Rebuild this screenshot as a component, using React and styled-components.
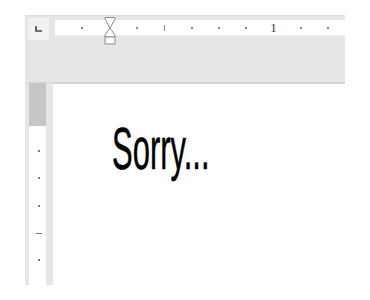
import React from "react";
import styled, { createGlobalStyle } from "styled-components";

const Global = createGlobalStyle`
	body {
		margin: 0;
		background: #ffffff;
		font-family: "Liberation Sans", Arial, sans-serif;
	}
`;

const Frame = styled.div`
	margin: 15px 0 0 25px;
	width: 320px;
	height: 270px;
	background: #e6e6e6;
	border-top: 1px solid #dadada;
	box-sizing: border-box;
	display: flex;
	flex-direction: column;
	overflow: hidden;
`;

const Header = styled.div`
	height: 67px;
	display: flex;
	align-items: flex-start;
	border-bottom: 1px solid #d6d6d6;
	box-sizing: border-box;
`;

const Corner = styled.div`
	width: 21px;
	height: 22px;
	margin: 2px 0 0 3px;
	background: #f2f2f2;
	display: flex;
	align-items: center;
	justify-content: center;
	svg {
		display: block;
	}
`;

const HRuler = styled.div`
	position: relative;
	flex: 1;
	height: 15px;
	margin: 4px 0 0 6px;
	background: #ffffff;
	border-bottom: 1px solid #efefef;
	display: flex;
	align-items: center;
	padding-left: 13.6px;
`;

const HCell = styled.div`
	flex: 0 0 27.33px;
	height: 15px;
	display: flex;
	align-items: center;
	justify-content: center;
	font-family: "Liberation Serif", "Times New Roman", serif;
	font-size: 13px;
	color: #3c3c3c;
`;

const Dot = styled.span`
	width: 2px;
	height: 2px;
	background: #8a8a8a;
`;

const HLine = styled.span`
	width: 1px;
	height: 6px;
	background: #8a8a8a;
`;

const Hourglass = styled.svg`
	position: absolute;
	left: 49px;
	top: -3px;
`;

const Body = styled.div`
	flex: 1;
	display: flex;
`;

const VRuler = styled.div`
	width: 17px;
	margin-left: 4px;
	margin-right: 7px;
	background: #ffffff;
	display: flex;
	flex-direction: column;
	align-items: stretch;
`;

const VThumb = styled.div`
	height: 43px;
	background: #c6c6c6;
	margin-bottom: 11.5px;
`;

const VCell = styled.div`
	flex: 0 0 27.33px;
	display: flex;
	align-items: center;
	justify-content: center;
	padding-left: 3px;
`;

const VDash = styled.span`
	width: ${(p) => (p.$long ? "6px" : "2px")};
	height: ${(p) => (p.$long ? "1px" : "2px")};
	background: #7a7a7a;
`;

const Page = styled.div`
	flex: 1;
	background: #ffffff;
	border-top: 1px solid #d2d2d2;
	padding: 36px 0 0 59px;
`;

const Heading = styled.div`
	display: inline-block;
	font-family: "Liberation Sans", Arial, sans-serif;
	font-size: 59px;
	line-height: 59px;
	color: #000000;
	-webkit-text-stroke: 0.5px #000000;
	transform: scaleX(0.525);
	transform-origin: left top;
	white-space: nowrap;
`;

const hMarks = ["dot", "", "dot", "line", "dot", "dot", "dot", "1", "dot", "dot"];
const vMarks = ["dot", "dot", "dot", "long", "dot"];

export default function App() {
	return (
		<>
			<Global />
			<Frame>
				<Header>
					<Corner>
						<svg width="7" height="6" viewBox="0 0 7 6">
							<path d="M1 0 V5 H7" stroke="#444" strokeWidth="1.6" fill="none" />
						</svg>
					</Corner>
					<HRuler>
						{hMarks.map((m, i) => (
							<HCell key={i}>
								{m === "dot" && <Dot />}
								{m === "line" && <HLine />}
								{m === "1" && "1"}
							</HCell>
						))}
						<Hourglass width="12" height="28" viewBox="0 0 12 28">
							<path d="M1 0.5 H11 V2 L6 11 L1 2 Z" fill="#fff" stroke="#8c8c8c" />
							<path d="M6 11 L11 18 V20 H1 V18 Z" fill="#fff" stroke="#8c8c8c" />
							<rect x="1" y="20" width="10" height="7" fill="#fff" stroke="#8c8c8c" />
						</Hourglass>
					</HRuler>
				</Header>
				<Body>
					<VRuler>
						<VThumb />
						{vMarks.map((m, i) => (
							<VCell key={i}>
								<VDash $long={m === "long"} />
							</VCell>
						))}
					</VRuler>
					<Page>
						<Heading>Sorry...</Heading>
					</Page>
				</Body>
			</Frame>
		</>
	);
}
